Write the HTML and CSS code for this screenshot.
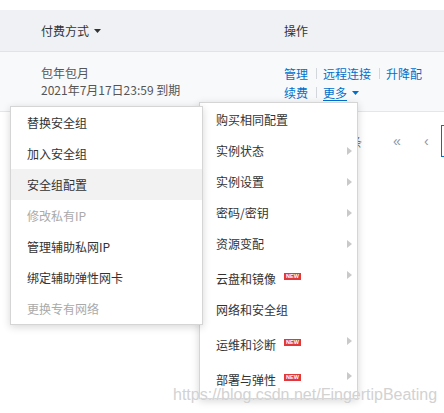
FILE: index.html
```html
<!DOCTYPE html>
<html lang="zh-CN">
<head>
<meta charset="utf-8">
<title>实例操作菜单</title>
<link rel="stylesheet" href="styles.css">
</head>
<body>
<div class="page">
  <div class="thead">
    <div class="th">付费方式<svg class="caret" width="7" height="4" viewBox="0 0 7 4"><polygon points="0,0 7,0 3.5,4" fill="#333"/></svg></div>
    <div class="th">操作</div>
  </div>
  <div class="trow">
    <div class="pay">
      <div>包年包月</div>
      <div>2021年7月17日23:59 到期</div>
    </div>
    <div class="ops">
      <div class="line"><a>管理</a><span class="sep"></span><a>远程连接</a><span class="sep"></span><a>升降配</a></div>
      <div class="line"><a>续费</a><span class="sep"></span><a class="more">更多</a><svg class="caret" width="7" height="4" viewBox="0 0 7 4"><polygon points="0,0 7,0 3.5,4" fill="#0070cc"/></svg></div>
    </div>
  </div>
  <div class="pager">
    <span class="total">共 1 条</span>
    <span class="pg first">«</span>
    <span class="pg prev">‹</span>
    <span class="cur"></span>
  </div>
</div>

<div class="menu menu-left">
  <div class="item">替换安全组</div>
  <div class="item">加入安全组</div>
  <div class="item active">安全组配置</div>
  <div class="item disabled">修改私有IP</div>
  <div class="item">管理辅助私网IP</div>
  <div class="item">绑定辅助弹性网卡</div>
  <div class="item disabled">更换专有网络</div>
</div>

<div class="menu menu-right">
  <div class="item">购买相同配置</div>
  <div class="item">实例状态<span class="arrow"></span></div>
  <div class="item">实例设置<span class="arrow"></span></div>
  <div class="item">密码/密钥<span class="arrow"></span></div>
  <div class="item">资源变配<span class="arrow"></span></div>
  <div class="item tall">云盘和镜像<span class="new">NEW</span><span class="arrow"></span></div>
  <div class="item">网络和安全组</div>
  <div class="item tall">运维和诊断<span class="new">NEW</span><span class="arrow"></span></div>
  <div class="item tall">部署与弹性<span class="new">NEW</span><span class="arrow"></span></div>
</div>

<div class="watermark">https://blog.csdn.net/FingertipBeating</div>
</body>
</html>
```

FILE: styles.css
```css
html, body {
  margin: 0;
  padding: 0;
}
body {
  width: 444px;
  height: 413px;
  overflow: hidden;
  position: relative;
  background: #fff;
  font-family: "Noto Sans CJK SC", "Noto Sans", sans-serif;
  font-size: 12px;
  color: #333;
}
* { box-sizing: border-box; }

.page { padding-top: 10px; }

.thead {
  display: grid;
  grid-template-columns: 243px 1fr;
  align-items: center;
  height: 42px;
  padding-left: 41px;
  background: #eff1f5;
  border-bottom: 1px solid #e1e3e8;
  color: #333;
}
.th { display: flex; align-items: center; }
.caret { margin-left: 5px; display: inline-block; vertical-align: middle; }

.trow {
  display: grid;
  grid-template-columns: 243px 1fr;
  height: 60px;
  padding: 12px 0 0 41px;
  background: #f8f9fa;
  border-bottom: 1px solid #e6e6e6;
}
.pay { color: #555; line-height: 17px; }
.ops { line-height: 19px; }
.line { display: flex; align-items: center; height: 19px; }
.ops a { color: #0070cc; text-decoration: none; }
.ops .more {
  text-decoration: underline;
  text-underline-offset: 2px;
}
.sep {
  display: inline-block;
  width: 1px;
  height: 11px;
  background: #d3d6db;
  margin: 0 6px 0 8px;
}

.pager {
  display: flex;
  align-items: center;
  width: 444px;
  height: 32px;
  margin-top: 13px;
  padding-left: 314px;
  overflow: hidden;
  color: #8a96a8;
}
.pager > span { flex: none; }
.total { width: 48px; text-align: right; color: #666; }
.pg { font-family: "Liberation Sans", sans-serif; font-size: 14px; }
.first { width: 31px; margin-left: 31px; }
.prev { width: 17px; }
.cur {
  width: 30px;
  height: 32px;
  border: 1px solid #0070cc;
}

.menu {
  position: absolute;
  background: #fff;
  border: 1px solid #d5d5d5;
  box-shadow: 0 2px 8px rgba(0, 0, 0, 0.16);
}
.menu-left {
  left: 10px;
  top: 106px;
  width: 193px;
  z-index: 2;
}
.menu-left .item {
  height: 31px;
  line-height: 31px;
  padding-left: 16px;
  white-space: nowrap;
}
.menu-left .active { background: #f2f2f2; }
.menu-left .disabled { color: #aaa; }

.menu-right {
  left: 199px;
  top: 102px;
  width: 159px;
  padding: 1px 0 3px;
  z-index: 1;
}
.menu-right .item {
  display: flex;
  align-items: center;
  height: 31px;
  padding: 0 5px 0 16px;
  white-space: nowrap;
}
.menu-right .item.tall {
  height: 35px;
  padding-top: 4px;
}
.arrow {
  margin-left: auto;
  width: 0;
  height: 0;
  border-left: 5px solid #c9c9c9;
  border-top: 4px solid transparent;
  border-bottom: 4px solid transparent;
}
.tall .arrow { margin-bottom: 7px; }
.new {
  margin-left: 8px;
  margin-bottom: 4px;
  height: 7px;
  padding: 0 2px;
  background: #e2383a;
  color: #fff;
  font-family: "Liberation Sans", sans-serif;
  font-weight: bold;
  font-size: 5.5px;
  line-height: 7px;
}

.watermark {
  position: absolute;
  left: 173px;
  top: 386px;
  z-index: 3;
  font-family: "Liberation Sans", sans-serif;
  font-size: 16px;
  line-height: 18px;
  color: #d2d2d2;
  white-space: nowrap;
  text-shadow: 0 0 1px rgba(255, 255, 255, 0.8);
}
```
